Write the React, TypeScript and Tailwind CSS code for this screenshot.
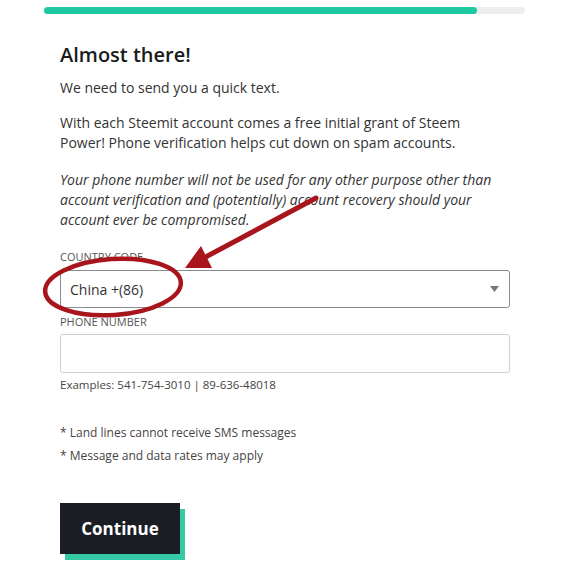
const font = { fontFamily: '"Open Sans", Lato, sans-serif' };

const Field = ({ label, children }: { label: string; children: React.ReactNode }) => (
  <div>
    <div className="text-[11px] leading-[16px] uppercase text-[#555]">{label}</div>
    {children}
  </div>
);

const Annotation = () => (
  <svg
    className="absolute left-0 top-0 pointer-events-none"
    width="569"
    height="567"
    viewBox="0 0 569 567"
  >
    <ellipse
      cx="113"
      cy="287"
      rx="68"
      ry="28"
      transform="rotate(-4 113 287)"
      fill="none"
      stroke="#a8151c"
      strokeWidth="4.5"
    />
    <line x1="316" y1="198" x2="200" y2="260" stroke="#a8151c" strokeWidth="5" strokeLinecap="round" />
    <polygon points="185,268 201,246 212,268" fill="#a8151c" />
  </svg>
);

export default function App() {
  return (
    <div className="relative w-[569px] h-[567px] bg-white overflow-hidden" style={font}>
      <div className="ml-[44px] mt-[7px] w-[481px] h-[7px] rounded-full bg-[#eeeeef]">
        <div className="h-full w-[433px] rounded-full bg-[#1ec9a2]" />
      </div>

      <div className="ml-[60px] w-[450px] text-[#333]">
        <h1 className="mt-[27px] text-[20px] leading-[28px] font-semibold text-[#1b1b1b]">Almost there!</h1>
        <p className="mt-[9px] text-[14px] leading-[20px]">We need to send you a quick text.</p>
        <p className="mt-[15px] w-[440px] text-[14px] leading-[20px]">
          With each Steemit account comes a free initial grant of Steem Power! Phone verification helps cut down on
          spam accounts.
        </p>
        <p className="mt-[17px] w-[440px] text-[14px] leading-[20px] italic">
          Your phone number will not be used for any other purpose other than account verification and (potentially)
          account recovery should your account ever be compromised.
        </p>

        <div className="mt-[19px]">
          <Field label="Country Code">
            <div className="mt-[5px] h-[38px] flex items-center justify-between rounded-[3px] border border-[#8c8c8c] pl-[9px] pr-[10px] text-[14px] text-[#333]">
              <span>China +(86)</span>
              <svg width="9" height="6" viewBox="0 0 9 6">
                <polygon points="0,0 9,0 4.5,6" fill="#777" />
              </svg>
            </div>
          </Field>
        </div>

        <div className="mt-[6px]">
          <Field label="Phone Number">
            <div className="mt-[4px] h-[39px] rounded-[3px] border border-[#cfcfcf]" />
          </Field>
        </div>

        <p className="mt-[4px] text-[11.5px] leading-[16px] text-[#444]">Examples: 541-754-3010 | 89-636-48018</p>

        <p className="mt-[30px] text-[12px] leading-[20px] text-[#444]">* Land lines cannot receive SMS messages</p>
        <p className="mt-[3px] text-[12px] leading-[20px] text-[#444]">* Message and data rates may apply</p>

        <button className="mt-[37px] w-[120px] h-[51px] bg-[#1a1d24] text-white text-[17px] font-bold shadow-[5px_6px_0_#35c9a6]">
          Continue
        </button>
      </div>

      <Annotation />
    </div>
  );
}
